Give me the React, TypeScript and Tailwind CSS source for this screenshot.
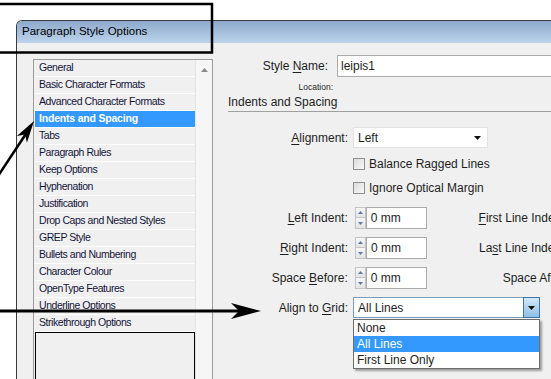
import React from "react";

const items = [
  "General",
  "Basic Character Formats",
  "Advanced Character Formats",
  "Indents and Spacing",
  "Tabs",
  "Paragraph Rules",
  "Keep Options",
  "Hyphenation",
  "Justification",
  "Drop Caps and Nested Styles",
  "GREP Style",
  "Bullets and Numbering",
  "Character Colour",
  "OpenType Features",
  "Underline Options",
  "Strikethrough Options",
];

function Spinner() {
  return (
    <div className="flex flex-col w-[11px] h-[22px] shrink-0">
      <div className="h-[11px] border border-[#c4c4c4] bg-gradient-to-b from-[#f7f7f7] to-[#e4e4e4] flex items-center justify-center">
        <svg width="5" height="3" viewBox="0 0 5 3"><polygon points="2.5,0 5,3 0,3" fill="#6277a6" /></svg>
      </div>
      <div className="h-[11px] border border-t-0 border-[#c4c4c4] bg-gradient-to-b from-[#f7f7f7] to-[#e4e4e4] flex items-center justify-center">
        <svg width="5" height="3" viewBox="0 0 5 3"><polygon points="0,0 5,0 2.5,3" fill="#6277a6" /></svg>
      </div>
    </div>
  );
}

function IndentRow({ ul, rest, pre, third, thirdMl }: { ul: string; rest: string; pre: string; third: React.ReactNode; thirdMl: string }) {
  return (
    <div className="flex items-center h-[22px]">
      <div className="w-[120px] text-right whitespace-nowrap">
        {pre}
        <span className="underline underline-offset-2">{ul}</span>
        {rest}
      </div>
      <div className="ml-[7px]"><Spinner /></div>
      <div className="w-[61px] h-[22px] border border-[#ababab] bg-white pl-[4px] flex items-center">0 mm</div>
      <div className={"whitespace-nowrap " + thirdMl}>{third}</div>
    </div>
  );
}

export default function App() {
  return (
    <div className="relative w-[551px] h-[379px] overflow-hidden bg-white font-['Liberation_Sans',Arial,sans-serif]">
      <div className="ml-[16px] mt-[20px] w-[560px] h-[380px] border-l border-t border-[#3a3a3a] rounded-tl-[6px] overflow-hidden flex flex-col">
        <div className="h-[22px] shrink-0 bg-gradient-to-b from-[#8ea9cb] to-[#bcd4ec] flex items-center pl-[5px] text-[11.5px] text-black">
          Paragraph Style Options
        </div>
        <div className="flex-1 bg-[#f0f0f0] flex pl-[16px] pt-[16px]">
          {/* list box */}
          <div className="w-[180px] h-[400px] shrink-0 border border-[#9c9c9c] bg-[#f0f0f0] flex pl-[1px]">
            <div className="w-[160px] flex flex-col">
              {items.map((it) => (
                <div
                  key={it}
                  className={
                    it === "Indents and Spacing"
                      ? "h-[17px] border-b border-white flex items-center pl-[4px] text-[10.5px] tracking-[-0.2px] bg-[#3399ff] text-white font-bold whitespace-nowrap"
                      : "h-[17px] border-b border-white flex items-center pl-[4px] text-[10.5px] tracking-[-0.45px] text-[#14143a] whitespace-nowrap"
                  }
                >
                  {it}
                </div>
              ))}
              <div className="w-[160px] h-[60px] border border-black" />
            </div>
            <div className="w-[17px] bg-[#f6f6f6] border-l border-[#e4e4e4] flex justify-center pt-[8px]">
              <svg width="7" height="4" viewBox="0 0 7 4"><polygon points="3.5,0 7,4 0,4" fill="#8a8a8a" /></svg>
            </div>
          </div>

          {/* right pane */}
          <div className="ml-[15px] -mt-[4px] w-[340px] shrink-0 flex flex-col text-[12px] text-[#1e1e1e]">
            <div className="flex items-center h-[22px]">
              <div className="w-[100px] text-right whitespace-nowrap">
                Style <span className="underline underline-offset-2">N</span>ame:
              </div>
              <div className="ml-[9px] flex-1 h-[22px] border border-[#ababab] bg-white pl-[3px] flex items-center">leipis1</div>
            </div>
            <div className="mt-[5px] h-[11px] w-[105px] text-right text-[8.5px] leading-[11px]">Location:</div>
            <div className="h-[19px] border-b border-[#a0a0a0] leading-[18px] whitespace-nowrap">Indents and Spacing</div>

            <div className="mt-[15px] flex items-center h-[21px]">
              <div className="w-[120px] text-right whitespace-nowrap">
                <span className="underline underline-offset-2">A</span>lignment:
              </div>
              <div className="ml-[5px] w-[135px] h-[21px] bg-white border border-[#e2e2e2] flex items-center justify-between pl-[4px] pr-[6px]">
                <span>Left</span>
                <svg width="7" height="4" viewBox="0 0 7 4"><polygon points="0,0 7,0 3.5,4" fill="#111" /></svg>
              </div>
            </div>

            <div className="mt-[4px] flex items-center h-[24px] pl-[125px]">
              <div className="w-[12px] h-[12px] border border-[#8f8f8f] bg-gradient-to-br from-[#dcdcdc] to-[#f8f8f8]" />
              <span className="ml-[4px] whitespace-nowrap">Balance Ragged Lines</span>
            </div>
            <div className="flex items-center h-[24px] pl-[125px]">
              <div className="w-[12px] h-[12px] border border-[#8f8f8f] bg-gradient-to-br from-[#dcdcdc] to-[#f8f8f8]" />
              <span className="ml-[4px] whitespace-nowrap">Ignore Optical Margin</span>
            </div>

            <div className="mt-[7px] flex flex-col gap-[8px]">
              <IndentRow
                pre=""
                ul="L"
                rest="eft Indent:"
                thirdMl="ml-[52px]"
                third={<><span className="underline underline-offset-2">F</span>irst Line Indent:</>}
              />
              <IndentRow
                pre=""
                ul="R"
                rest="ight Indent:"
                thirdMl="ml-[52px]"
                third={<>La<span className="underline underline-offset-2">s</span>t Line Indent:</>}
              />
              <IndentRow
                pre="Space "
                ul="B"
                rest="efore:"
                thirdMl="ml-[76px]"
                third={<>Space After:</>}
              />
              <div className="flex items-center h-[21px]">
                <div className="w-[120px] text-right whitespace-nowrap">
                  Align to <span className="underline underline-offset-2">G</span>rid:
                </div>
                <div className="ml-[5px] relative w-[187px] h-[21px] bg-white border border-[#7d9cbd] flex items-center">
                  <span className="pl-[4px] flex-1">All Lines</span>
                  <div className="w-[17px] h-[21px] -mr-px -mt-px -mb-px border border-[#3f78a8] bg-gradient-to-b from-[#d3e8f8] to-[#8fbfe2] flex items-center justify-center">
                    <svg width="7" height="4" viewBox="0 0 7 4"><polygon points="0,0 7,0 3.5,4" fill="#111" /></svg>
                  </div>
                  <div className="absolute left-[-1px] top-[21px] w-[187px] h-[50px] bg-white border border-[#6e6e6e] shadow-[2px_2px_2px_rgba(0,0,0,0.35)] flex flex-col">
                    <div className="h-[16px] leading-[16px] pl-[3px]">None</div>
                    <div className="h-[16px] leading-[16px] pl-[3px] bg-[#3399ff] text-white">All Lines</div>
                    <div className="h-[16px] leading-[16px] pl-[3px]">First Line Only</div>
                  </div>
                </div>
              </div>
            </div>
          </div>
        </div>
      </div>

      <svg className="absolute left-0 top-0 pointer-events-none" width="551" height="379">
        <rect x="-5" y="4" width="217" height="48.5" fill="none" stroke="black" strokeWidth="2.5" />
        <line x1="-8" y1="185" x2="25.5" y2="134.5" stroke="black" strokeWidth="2.5" />
        <polygon points="34,121 26.9,142.7 25.2,134.4 16.9,136.1" fill="black" />
        <line x1="0" y1="311" x2="240" y2="311" stroke="black" strokeWidth="3" />
        <polygon points="261,311 231,303 239,311 231,319" fill="black" />
      </svg>
    </div>
  );
}
